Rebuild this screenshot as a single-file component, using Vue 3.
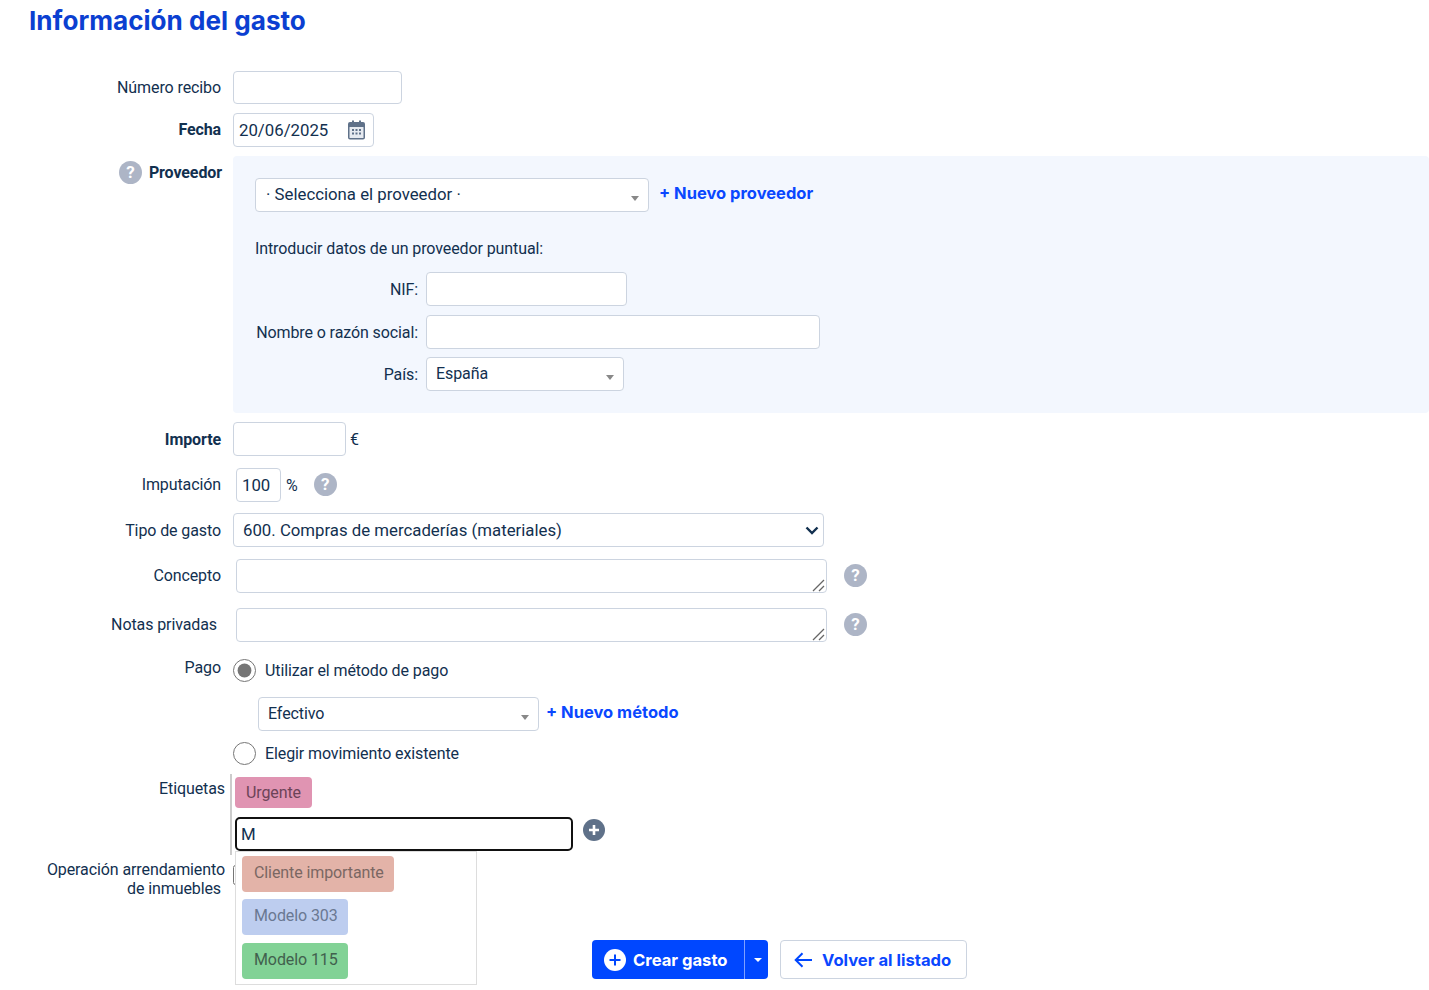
<script setup>
const found = [
  { name: 'Cliente importante', cls: 'salmon' },
  { name: 'Modelo 303', cls: 'blue' },
  { name: 'Modelo 115', cls: 'green' },
]
</script>

<template>
  <div class="page">
    <h1>Información del gasto</h1>

    <form class="form" @submit.prevent>
      <div class="row r-num">
        <label class="lab">Número recibo</label>
        <input class="inp w-num" type="text" />
      </div>

      <div class="row r-date">
        <label class="lab strong">Fecha</label>
        <div class="inp date">
          <span>20/06/2025</span>
          <svg width="19" height="20" viewBox="0 0 19 20">
            <path fill="#5f7189" d="M3 2h2V0.500h2V2h5V0.500h2V2h2a2 2 0 0 1 2 2v13.500a2 2 0 0 1-2 2H3a2 2 0 0 1-2-2V4a2 2 0 0 1 2-2z" />
            <rect x="2.500" y="7" width="14" height="11" rx="0.500" fill="#e6eaf0" />
            <g fill="#5f7189">
              <rect x="5" y="9" width="2" height="2" />
              <rect x="8.500" y="9" width="2" height="2" />
              <rect x="12" y="9" width="2" height="2" />
              <rect x="5" y="12.500" width="2" height="2" />
              <rect x="8.500" y="12.500" width="2" height="2" />
              <rect x="12" y="12.500" width="2" height="2" />
            </g>
          </svg>
        </div>
      </div>

      <div class="row r-prov">
        <label class="lab strong prov-lab"><span class="help">?</span>Proveedor</label>
        <div class="panel">
          <div class="prov-top">
            <div class="sel w-prov">· Selecciona el proveedor ·<i class="tri"></i></div>
            <a class="link">+ Nuevo proveedor</a>
          </div>
          <p class="intro">Introducir datos de un proveedor puntual:</p>
          <div class="sub">
            <label>NIF:</label>
            <input class="inp w-nif" type="text" />
          </div>
          <div class="sub">
            <label>Nombre o razón social:</label>
            <input class="inp w-razon" type="text" />
          </div>
          <div class="sub sub-pais">
            <label>País:</label>
            <div class="sel w-pais">España<i class="tri"></i></div>
          </div>
        </div>
      </div>

      <div class="row r-imp">
        <label class="lab strong">Importe</label>
        <input class="inp w-imp" type="text" />
        <span class="unit">€</span>
      </div>

      <div class="row r-imput">
        <label class="lab">Imputación</label>
        <input class="inp w-pct" type="text" value="100" />
        <span class="unit pct">%</span>
        <span class="help help-pct">?</span>
      </div>

      <div class="row r-tipo">
        <label class="lab">Tipo de gasto</label>
        <div class="tipo">
          <select class="native">
            <option>600. Compras de mercaderías (materiales)</option>
          </select>
          <svg class="chevron" width="14" height="9" viewBox="0 0 14 9">
            <path d="M1.500 1.500 7 7l5.500-5.500" fill="none" stroke="#12304f" stroke-width="2.400" />
          </svg>
        </div>
      </div>

      <div class="row r-concepto">
        <label class="lab">Concepto</label>
        <div class="area-box">
          <textarea class="area"></textarea>
          <svg class="grip" width="13" height="13" viewBox="0 0 13 13">
            <path d="M1 12 12 1M7 12l5-5" fill="none" stroke="#666" stroke-width="1.300" />
          </svg>
        </div>
        <span class="help help-area">?</span>
      </div>

      <div class="row r-notas">
        <label class="lab notas-lab">Notas privadas</label>
        <div class="area-box">
          <textarea class="area"></textarea>
          <svg class="grip" width="13" height="13" viewBox="0 0 13 13">
            <path d="M1 12 12 1M7 12l5-5" fill="none" stroke="#666" stroke-width="1.300" />
          </svg>
        </div>
        <span class="help help-area">?</span>
      </div>

      <div class="row r-pago">
        <label class="lab pago-lab">Pago</label>
        <div class="pago">
          <label class="radio"><input type="radio" name="pago" checked />Utilizar el método de pago</label>
          <div class="metodo">
            <div class="sel w-metodo">Efectivo<i class="tri"></i></div>
            <a class="link">+ Nuevo método</a>
          </div>
          <label class="radio second"><input type="radio" name="pago" />Elegir movimiento existente</label>
        </div>
      </div>

      <div class="row r-tags">
        <label class="lab tags-lab">Etiquetas</label>
        <div class="tags">
          <span class="tag urgente">Urgente</span>
          <div class="tag-input">
            <input class="tag-text" type="text" value="M" />
            <span class="add">
              <svg width="22" height="22" viewBox="0 0 22 22">
                <circle cx="11" cy="11" r="11" fill="#5f7189" />
                <path d="M11 6v10M6 11h10" stroke="#fff" stroke-width="2.600" />
              </svg>
            </span>
          </div>
          <div class="drop">
            <span v-for="t in found" :key="t.name" class="opt" :class="t.cls">{{ t.name }}</span>
          </div>
        </div>
      </div>

      <div class="row r-arr">
        <label class="lab arr-lab">Operación arrendamiento<br /><span>de inmuebles</span></label>
        <input class="check" type="checkbox" />
      </div>

      <div class="actions">
        <div class="split">
          <button class="btn-main" type="button">
            <svg width="22" height="22" viewBox="0 0 22 22">
              <circle cx="11" cy="11" r="11" fill="#fff" />
              <path d="M11 5.500v11M5.500 11h11" stroke="#0047ff" stroke-width="2" />
            </svg>
            Crear gasto
          </button>
          <button class="btn-caret" type="button"><i></i></button>
        </div>
        <button class="btn-back" type="button">
          <svg width="19" height="16" viewBox="0 0 19 16">
            <path d="M18 8H2M8.500 1.200 1.700 8l6.800 6.800" fill="none" stroke="#0047ff" stroke-width="2" />
          </svg>
          Volver al listado
        </button>
      </div>
    </form>
  </div>
</template>

<style>
body {
  background: #fff;
}
</style>

<style scoped>
.page {
  width: 1429px;
  height: 990px;
  overflow: hidden;
  font-family: Roboto, sans-serif;
  font-size: 16px;
  letter-spacing: -0.100px;
  color: #12304f;
}
h1 {
  margin: 0;
  padding: 5px 0 0 29px;
  height: 71px;
  box-sizing: border-box;
  font-family: Inter, sans-serif;
  font-size: 26.100px;
  line-height: 32px;
  font-weight: 700;
  letter-spacing: 0;
  color: #0b3fd1;
}
.row {
  display: flex;
  align-items: flex-start;
}
.lab {
  width: 221px;
  margin-right: 12px;
  flex: none;
  text-align: right;
  line-height: 20px;
  padding-top: 7px;
}
.strong {
  font-weight: 700;
}
.inp,
.sel,
.native,
.area,
.tag-text {
  box-sizing: border-box;
  font-family: Roboto, sans-serif;
  font-size: 16.800px;
  letter-spacing: 0;
  color: #12304f;
  background: #fff;
  border: 1px solid #ccd4e0;
  border-radius: 4px;
  outline: none;
}
.inp {
  height: 34px;
  padding: 0 5px;
}
.w-num {
  width: 169px;
  height: 33px;
}
.r-date {
  margin-top: 9px;
}
.date {
  width: 141px;
  display: flex;
  align-items: center;
  justify-content: space-between;
  padding-right: 7px;
}
.r-prov {
  margin-top: 9px;
}
.prov-lab {
  display: flex;
  justify-content: flex-end;
  align-items: center;
  width: 222px;
  margin-right: 11px;
  padding-top: 5px;
}
.help {
  flex: none;
  display: inline-block;
  width: 23px;
  height: 23px;
  border-radius: 50%;
  background: #adb5c6;
  color: #fff;
  font-size: 17px;
  font-weight: 700;
  line-height: 23px;
  text-align: center;
}
.prov-lab .help {
  margin-right: 7px;
}
.panel {
  flex: 1;
  height: 257px;
  box-sizing: border-box;
  padding: 22px 22px 0;
  background: #f3f7fe;
  border-radius: 4px;
}
.prov-top {
  display: flex;
  align-items: flex-start;
}
.sel {
  position: relative;
  height: 34px;
  line-height: 31px;
  padding-left: 9px;
}
.tri {
  position: absolute;
  top: 17px;
  right: 9px;
  border-top: 5px solid #888;
  border-left: 4px solid transparent;
  border-right: 4px solid transparent;
}
.w-prov {
  width: 394px;
  padding-left: 10px;
}
.w-pais,
.w-metodo {
  font-size: 16px;
  letter-spacing: -0.100px;
}
.w-pais {
  line-height: 32px;
}
.link {
  font-family: Inter, sans-serif;
  font-size: 16.500px;
  font-weight: 700;
  letter-spacing: 0;
  color: #0a47ff;
  line-height: 31px;
  margin-left: 10px;
}
.intro {
  margin: 27px 0 13px;
  line-height: 20px;
}
.sub {
  display: flex;
  align-items: center;
  height: 34px;
  margin-top: 9px;
}
.sub-pais {
  margin-top: 8px;
}
.sub label {
  width: 163px;
  margin-right: 8px;
  text-align: right;
  white-space: nowrap;
}
.w-nif {
  width: 201px;
}
.w-razon {
  width: 394px;
}
.w-pais {
  width: 198px;
}
.r-imp {
  margin-top: 9px;
}
.r-imp .lab,
.r-tipo .lab {
  padding-top: 8px;
}
.w-imp {
  width: 113px;
}
.unit {
  margin: 1px 0 0 4px;
  line-height: 33px;
}
.r-imput {
  margin-top: 12px;
}
.r-imput .lab {
  padding-top: 7px;
}
.w-pct {
  width: 45px;
  margin-left: 3px;
}
.pct {
  margin-left: 5px;
}
.help-pct {
  margin: 5px 0 0 16px;
}
.r-tipo {
  margin-top: 11px;
}
.tipo {
  position: relative;
  height: 34px;
}
.native {
  appearance: none;
  display: block;
  width: 591px;
  height: 34px;
  padding-left: 9px;
}
.chevron {
  position: absolute;
  right: 5px;
  top: 13px;
  pointer-events: none;
}
.r-concepto {
  margin-top: 12px;
}
.area-box {
  position: relative;
  flex: none;
  width: 591px;
  height: 34px;
  margin-left: 3px;
}
.area {
  display: block;
  width: 591px;
  height: 34px;
  padding: 5px;
  resize: none;
}
.grip {
  position: absolute;
  right: 2px;
  bottom: 1px;
  pointer-events: none;
}
.help-area {
  margin: 5px 0 0 17px;
}
.r-notas {
  margin-top: 15px;
}
.notas-lab {
  width: 217px;
  margin-right: 16px;
}
.r-pago {
  margin-top: 16px;
}
.pago-lab {
  padding-top: 0;
}
.radio {
  display: flex;
  align-items: center;
  height: 23px;
}
.radio input {
  width: 23px;
  height: 23px;
  margin: 0 9px 0 0;
  accent-color: #757575;
}
.pago {
  padding-top: 1px;
}
.metodo {
  display: flex;
  align-items: flex-start;
  margin: 15px 0 0 25px;
}
.w-metodo {
  width: 281px;
}
.metodo .link {
  margin-left: 7px;
}
.second {
  margin-top: 11px;
}
.r-tags {
  margin-top: 9px;
}
.tags-lab {
  width: 225px;
  margin-right: 5px;
  padding-top: 5px;
}
.tags {
  position: relative;
  box-sizing: border-box;
  height: 81px;
  padding: 3px 0 0 3px;
  border-left: 2px solid #ccc;
}
.tag {
  display: inline-block;
  border-radius: 4px;
  line-height: 31px;
  padding: 0 11px;
}
.urgente {
  background: #e094b2;
  color: #6c4358;
}
.tag-input {
  display: flex;
  align-items: flex-start;
  margin-top: 9px;
}
.tag-text {
  width: 338px;
  height: 34px;
  padding: 0 4px;
  border: 2px solid #111;
  border-radius: 5px;
}
.add {
  height: 22px;
  margin-left: 10px;
  margin-top: 2px;
}
.drop {
  position: absolute;
  left: 3px;
  top: 77px;
  z-index: 2;
  width: 242px;
  height: 134px;
  box-sizing: border-box;
  padding: 4px 6px;
  display: flex;
  flex-direction: column;
  align-items: flex-start;
  gap: 7px;
  background: #fff;
  border: 1px solid #ddd;
}
.opt {
  border-radius: 4px;
  height: 36px;
  line-height: 33px;
  padding: 0 10px 0 12px;
}
.salmon {
  background: #e3b3a8;
  color: #7a6763;
}
.blue {
  background: #bdcdef;
  color: #6a7892;
}
.green {
  margin-top: 1px;
  background: #82d296;
  color: #41604d;
}
.r-arr {
  margin-top: 4px;
}
.arr-lab {
  width: 225px;
  margin-right: 8px;
  padding-top: 1px;
  line-height: 19px;
}
.arr-lab span {
  margin-right: 4px;
}
.check {
  margin: 6px 0 0;
  width: 20px;
  height: 20px;
}
.actions {
  display: flex;
  gap: 12px;
  margin: 42px 0 0 592px;
}
.split {
  display: flex;
}
.actions button {
  font-family: Inter, sans-serif;
  font-size: 16.600px;
  font-weight: 700;
  height: 39px;
  box-sizing: border-box;
  cursor: pointer;
}
.btn-main {
  display: flex;
  align-items: center;
  gap: 7px;
  width: 153px;
  padding: 0 0 0 12px;
  color: #fff;
  background: #0047ff;
  border: none;
  border-right: 1px solid #7fa0ff;
  border-radius: 4px 0 0 4px;
}
.btn-caret {
  display: flex;
  align-items: center;
  justify-content: center;
  width: 23px;
  padding: 0 0 0 3px;
  background: #0047ff;
  border: none;
  border-radius: 0 4px 4px 0;
}
.btn-caret i {
  border-top: 4px solid #fff;
  border-left: 4px solid transparent;
  border-right: 4px solid transparent;
}
.btn-back {
  display: flex;
  align-items: center;
  gap: 9px;
  width: 187px;
  padding: 0 0 0 13px;
  color: #0a47ff;
  background: #fff;
  border: 1px solid #ccd4e0;
  border-radius: 4px;
}
</style>
